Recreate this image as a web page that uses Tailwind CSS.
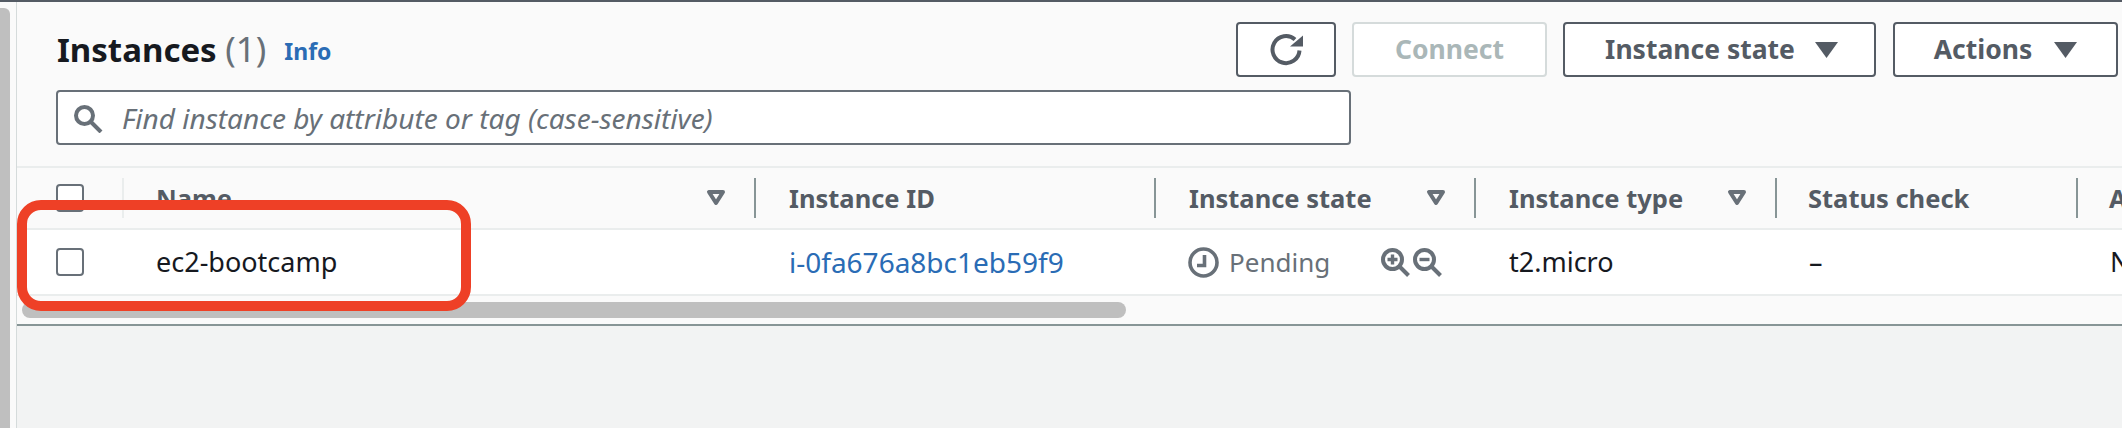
<!DOCTYPE html>
<html lang="en">
<head>
    <meta charset="UTF-8">
    <title>Instances</title>
    <script src="https://cdn.jsdelivr.net/npm/@tailwindcss/browser@4"></script>
</head>
<body class="relative h-[428px] w-[2122px] overflow-hidden bg-[#f2f3f3] font-['Noto_Sans',sans-serif]">
    <div class="h-[2px] bg-[#545b64]"></div>
    <div class="flex h-[426px]">
        <!-- page scrollbar -->
        <div class="w-[17px] shrink-0 border-r border-[#d5dbdb] bg-[#fafafa] pt-[6px]">
            <div class="h-full w-[10px] rounded-tr-[6px] bg-[#bfbfbf]"></div>
        </div>

        <div class="min-w-0 flex-1">
            <div class="h-[324px] border-b-2 border-[#879596] bg-[#fafafa]">
                <!-- toolbar -->
                <div class="flex h-[166px] border-b-2 border-[#eaeded] pl-[39px] pr-[4px] pt-[20px]">
                    <div class="w-[1295px]">
                        <div class="flex h-[52px] items-center pl-[1px]">
                            <h1 class="whitespace-nowrap text-[33px] font-bold leading-none text-[#16191f]">Instances <span class="text-[35px] font-normal text-[#687078]">(1)</span></h1>
                            <a class="ml-[18px] mt-[6px] text-[23px] font-bold leading-none text-[#2a6cb5]">Info</a>
                        </div>
                        <div class="mt-[16px] flex h-[55px] items-center rounded-[4px] border-2 border-[#687078] bg-white pl-[16px]">
                            <svg class="h-[30px] w-[30px]" viewBox="0 0 30 30" fill="none" stroke="#687078" stroke-width="4"><circle cx="10.500" cy="12.500" r="8.500"/><path d="M17 19l10 10"/></svg>
                            <span class="ml-[18px] text-[28px] italic leading-none text-[#687078]">Find instance by attribute or tag (case-sensitive)</span>
                        </div>
                    </div>
                    <div class="-ml-[115px] flex h-[55px] gap-[16px]">
                        <button class="flex w-[100px] items-center justify-center rounded-[4px] border-2 border-[#545b64] bg-white">
                            <svg class="h-[34px] w-[36px]" viewBox="0 0 36 34" fill="none"><path d="M27 6.500A13.500 13.500 0 1 0 31.500 17.500" stroke="#545b64" stroke-width="4"/><path d="M22 13.500h13V2.500z" fill="#545b64"/></svg>
                        </button>
                        <button class="w-[195px] rounded-[4px] border-2 border-[#d5dbdb] bg-white text-[26.500px] font-bold text-[#aab7b8]">Connect</button>
                        <button class="flex w-[313px] items-center justify-center gap-[20px] rounded-[4px] border-2 border-[#545b64] bg-white pl-[4px] text-[26.500px] font-bold text-[#545b64]">Instance state
                            <svg class="h-[16px] w-[23px]" viewBox="0 0 23 16"><path d="M0 0h23L11.500 16z" fill="#545b64"/></svg>
                        </button>
                        <button class="ml-[1px] flex w-[225px] items-center justify-center gap-[22px] rounded-[4px] border-2 border-[#545b64] bg-white text-[26.500px] font-bold text-[#545b64]">Actions
                            <svg class="h-[16px] w-[23px]" viewBox="0 0 23 16"><path d="M0 0h23L11.500 16z" fill="#545b64"/></svg>
                        </button>
                    </div>
                </div>

                <!-- table header -->
                <div class="flex h-[62px] items-center border-b-2 border-[#eaeded] text-[25.500px] font-bold text-[#545b64]">
                    <div class="w-[105px] pl-[39px]"><div class="h-[28px] w-[28px] rounded-[4px] border-2 border-[#687078] bg-white"></div></div>
                    <div class="flex h-[40px] w-[632px] items-center justify-between border-l-2 border-[#eaeded] pl-[32px] pr-[28px]">Name
                        <svg class="h-[16px] w-[20px]" viewBox="0 0 20 16" fill="none"><path d="M3 2h14l-7 11z" stroke="#687078" stroke-width="4" stroke-linejoin="round"/></svg>
                    </div>
                    <div class="flex h-[40px] w-[400px] items-center border-l-2 border-[#879596] pl-[33px]">Instance ID</div>
                    <div class="flex h-[40px] w-[320px] items-center justify-between border-l-2 border-[#879596] pl-[33px] pr-[28px]">Instance state
                        <svg class="h-[16px] w-[20px]" viewBox="0 0 20 16" fill="none"><path d="M3 2h14l-7 11z" stroke="#687078" stroke-width="4" stroke-linejoin="round"/></svg>
                    </div>
                    <div class="flex h-[40px] w-[301px] items-center justify-between border-l-2 border-[#879596] pl-[33px] pr-[28px]">Instance type
                        <svg class="h-[16px] w-[20px]" viewBox="0 0 20 16" fill="none"><path d="M3 2h14l-7 11z" stroke="#687078" stroke-width="4" stroke-linejoin="round"/></svg>
                    </div>
                    <div class="flex h-[40px] w-[301px] items-center border-l-2 border-[#879596] pl-[31px]">Status check</div>
                    <div class="flex h-[40px] flex-1 items-center overflow-hidden whitespace-nowrap border-l-2 border-[#879596] pl-[31px]">Alarm status</div>
                </div>

                <!-- table row -->
                <div class="flex h-[66px] items-center border-b-2 border-[#eaeded] bg-white text-[27px] text-[#16191f]">
                    <div class="w-[106px] pl-[39px]"><div class="h-[28px] w-[28px] rounded-[4px] border-2 border-[#687078] bg-white"></div></div>
                    <div class="w-[632px] pl-[33px]">ec2-bootcamp</div>
                    <div class="w-[400px] pl-[34px] text-[28px] text-[#2a6cb5]">i-0fa676a8bc1eb59f9</div>
                    <div class="flex w-[320px] items-center pl-[33px] text-[#687078]">
                        <svg class="h-[31px] w-[31px]" viewBox="0 0 31 31" fill="none" stroke="#687078" stroke-width="3.600"><circle cx="15.500" cy="15.500" r="13.500"/><path d="M16.500 8v10.500H9"/></svg>
                        <span class="ml-[10px] w-[102px] text-[26px]">Pending</span>
                        <svg class="ml-[50px] h-[29px] w-[29px]" viewBox="0 0 29 29" fill="none" stroke="#687078" stroke-width="4"><circle cx="11.500" cy="11.500" r="9.500"/><path d="M18 18l9.500 9.500"/><path d="M6.500 11.500h10M11.500 6.500v10" stroke-width="3.400"/></svg>
                        <svg class="ml-[3px] h-[29px] w-[29px]" viewBox="0 0 29 29" fill="none" stroke="#687078" stroke-width="4"><circle cx="11.500" cy="11.500" r="9.500"/><path d="M18 18l9.500 9.500"/><path d="M6.500 11.500h10" stroke-width="3.400"/></svg>
                    </div>
                    <div class="w-[301px] pl-[34px]">t2.micro</div>
                    <div class="w-[301px] pl-[33px]">–</div>
                    <div class="flex-1 overflow-hidden whitespace-nowrap pl-[33px]">No alarms</div>
                </div>

                <!-- table scrollbar -->
                <div class="pl-[5px] pt-[6px]">
                    <div class="h-[16px] w-[1104px] rounded-[8px] bg-[#bfbfbf]"></div>
                </div>
            </div>
        </div>
    </div>

    <!-- annotation -->
    <div class="absolute left-[17px] top-[200px] h-[111px] w-[454px] rounded-[24px] border-[10px] border-[#ee4026]"></div>
</body>
</html>
